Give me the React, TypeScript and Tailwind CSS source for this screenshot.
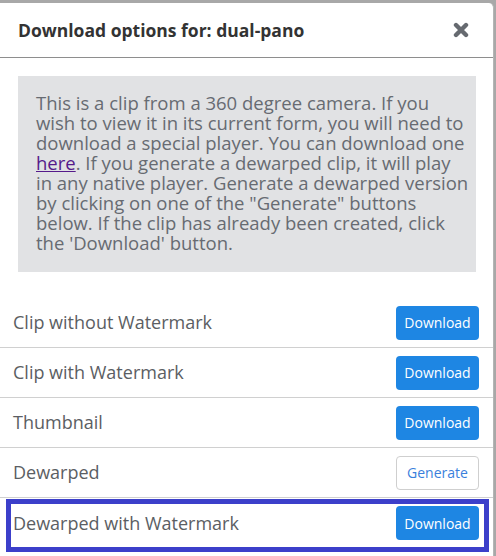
const rows = [
  { label: "Clip without Watermark", action: "Download" },
  { label: "Clip with Watermark", action: "Download" },
  { label: "Thumbnail", action: "Download" },
  { label: "Dewarped", action: "Generate" },
  { label: "Dewarped with Watermark", action: "Download", focused: true },
];

function CloseIcon() {
  return (
    <svg width="16" height="16" viewBox="0 0 16 16" aria-hidden="true">
      <path
        d="M3 3 L13 13 M13 3 L3 13"
        stroke="#666a70"
        strokeWidth="4.4"
        strokeLinecap="round"
      />
    </svg>
  );
}

export default function App() {
  return (
    <div
      className="h-[556px] w-[496px] overflow-hidden bg-[#a8a8a8] pr-[2px] pt-[3px]"
      style={{ fontFamily: '"Open Sans", sans-serif' }}
    >
      <div className="h-full rounded-tr-[5px] border-r border-[#b5b5b5] bg-white">
        {/* Header */}
        <div className="flex h-[55px] items-center justify-between border-b border-[#8e8e8e] pl-[18px] pr-[24px]">
          <h4 className="text-[17.5px] font-bold text-[#333]">
            Download options for: dual-pano
          </h4>
          <button aria-label="Close" className="flex items-center">
            <CloseIcon />
          </button>
        </div>

        {/* Notice — lines kept as in the original wrap */}
        <div className="ml-[18px] mr-[17px] mt-[18px] whitespace-nowrap bg-[#e1e2e4] px-[18px] pb-[19px] pt-[17px] text-[18.5px] leading-[20px] text-[#676b72]">
          <p>This is a clip from a 360 degree camera. If you</p>
          <p>wish to view it in its current form, you will need to</p>
          <p>download a special player. You can download one</p>
          <p>
            <a href="#" className="text-[#551a8b] underline">
              here
            </a>
            . If you generate a dewarped clip, it will play
          </p>
          <p>in any native player. Generate a dewarped version</p>
          <p>by clicking on one of the "Generate" buttons</p>
          <p>below. If the clip has already been created, click</p>
          <p>the 'Download' button.</p>
        </div>

        {/* Options */}
        <ul className="mt-[26px]">
          {rows.map((r, i) => (
            <li
              key={r.label}
              className={`relative flex h-[50px] items-center justify-between pl-[13px] pr-[14px] ${
                i < rows.length - 1 ? "border-b border-[#d0d0d0]" : ""
              }`}
            >
              <span className="text-[18px] text-[#5b5e63]">{r.label}</span>
              {r.action === "Download" ? (
                <button className="h-[34px] w-[83px] rounded-[4px] bg-[#1e86e3] text-[14px] text-white">
                  Download
                </button>
              ) : (
                <button className="h-[34px] w-[83px] rounded-[4px] border border-[#cfcfcf] bg-white text-[14px] text-[#3a7fdc]">
                  Generate
                </button>
              )}
              {r.focused && (
                <span className="pointer-events-none absolute bottom-[-4px] left-[6px] right-[4px] top-[1px] border-[5px] border-[#3c3fca]" />
              )}
            </li>
          ))}
        </ul>
      </div>
    </div>
  );
}
